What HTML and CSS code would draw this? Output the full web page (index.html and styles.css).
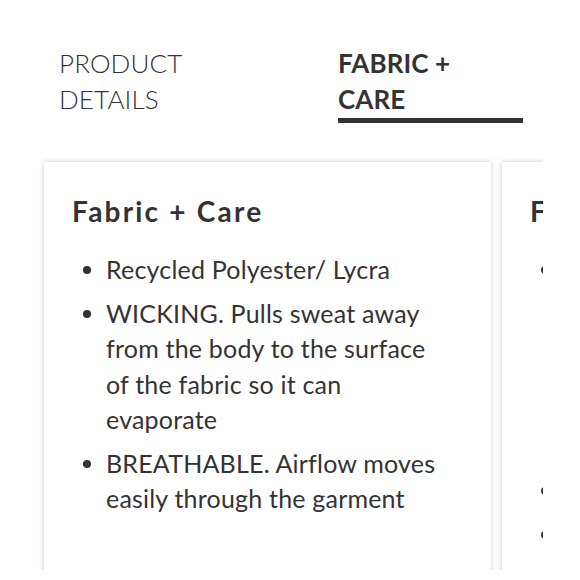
FILE: index.html
```html
<!DOCTYPE html>
<html>
<head>
<meta charset="utf-8">
<link rel="stylesheet" href="styles.css">
</head>
<body>
<div class="page">
  <nav class="tabs">
    <div class="tab">PRODUCT<br>DETAILS</div>
    <div class="tab active">FABRIC +<br>CARE</div>
  </nav>
  <div class="carousel">
    <div class="track">
      <section class="card">
        <h2 class="card-title">Fabric + Care</h2>
        <ul class="list">
          <li>Recycled Polyester/ Lycra</li>
          <li>WICKING. Pulls sweat away from the body to the surface of the fabric so it can evaporate</li>
          <li>BREATHABLE. Airflow moves easily through the garment</li>
        </ul>
      </section>
      <section class="card">
        <h2 class="card-title">Fabric + Care</h2>
        <ul class="list">
          <li>CARE. Machine wash cold with like colours on a gentle cycle, inside out. Do not use fabric softener. Line dry in the shade, away from direct heat and sunlight</li>
          <li>Do not iron</li>
          <li>Do not dry clean</li>
        </ul>
      </section>
    </div>
  </div>
</div>
</body>
</html>
```

FILE: styles.css
```css
* { box-sizing: border-box; }
html, body { margin: 0; padding: 0; background: #fff; }
body {
  font-family: Lato, "Open Sans", sans-serif;
  color: #333;
}
.page {
  width: 580px;
  height: 580px;
  overflow: hidden;
}
.tabs {
  display: grid;
  grid-template-columns: 185px 185px;
  column-gap: 94px;
  padding: 45px 0 0 59px;
}
.tab {
  font-size: 26px;
  line-height: 36px;
  font-weight: 300;
  letter-spacing: 0.1px;
  padding-bottom: 1px;
  border-bottom: 5px solid transparent;
}
.tab.active {
  font-weight: 700;
  border-bottom-color: #333;
}
.carousel {
  margin: 35px 0 0 32px;
  width: 511px;
  height: 412px;
  overflow: hidden;
  padding: 4px 0 0 12px;
}
.track {
  display: flex;
  gap: 11px;
  height: 100%;
}
.card {
  flex: 0 0 447px;
  height: 430px;
  background: #fff;
  box-shadow: 0 0 5px rgba(0,0,0,0.22);
  padding: 31px 43px 0 28px;
}
.card-title {
  margin: 0 0 23px;
  font-size: 28px;
  font-weight: 700;
  line-height: 36px;
  letter-spacing: 2.2px;
}
.list {
  margin: 0;
  padding: 0;
  list-style: none;
  font-size: 25px;
  line-height: 35.5px;
  letter-spacing: 0.2px;
}
.list li {
  display: flex;
  gap: 15px;
  margin-bottom: 8px;
}
.list li::before {
  content: "";
  flex: 0 0 8px;
  height: 8px;
  margin: 14px 0 0 11px;
  border-radius: 50%;
  background: #333;
}
```
